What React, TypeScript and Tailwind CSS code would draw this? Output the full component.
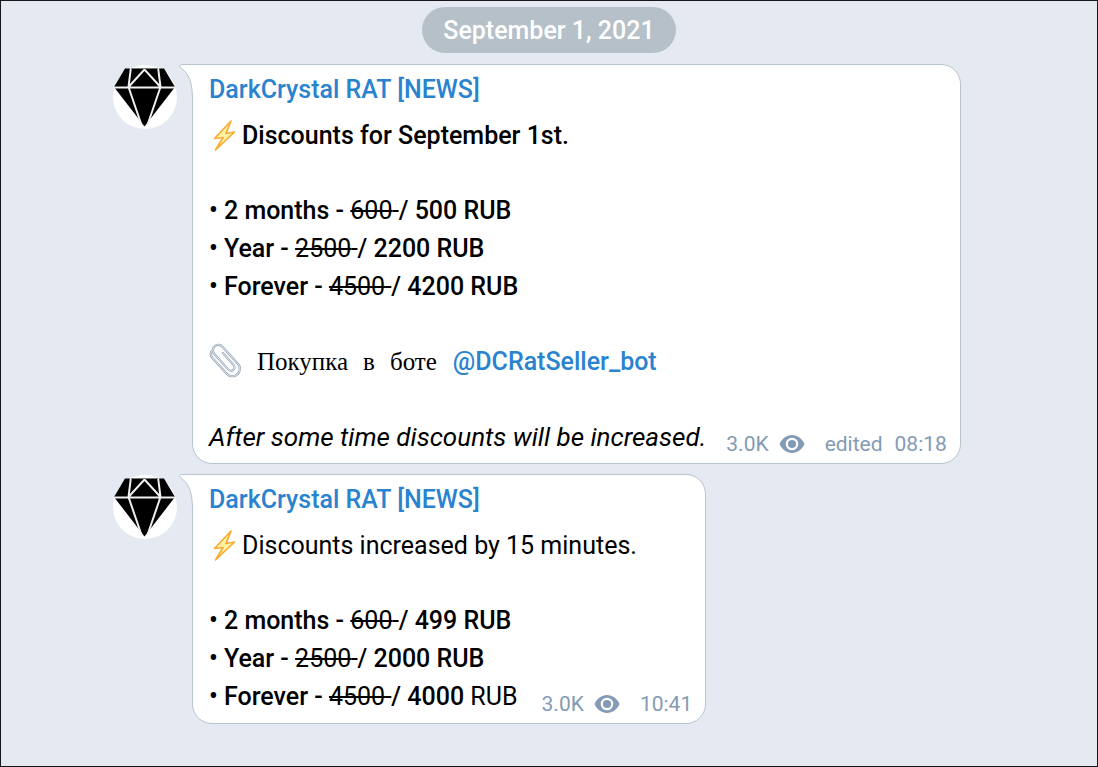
import type { ReactNode } from "react";

type Price = {
  period: string;
  before: string;
  after: string;
  regularCurrency?: boolean;
};

const septemberPrices: Price[] = [
  { period: "2 months", before: "600", after: "500" },
  { period: "Year", before: "2500", after: "2200" },
  { period: "Forever", before: "4500", after: "4200" },
];

const increasedPrices: Price[] = [
  { period: "2 months", before: "600", after: "499" },
  { period: "Year", before: "2500", after: "2000" },
  { period: "Forever", before: "4500", after: "4000", regularCurrency: true },
];

function Avatar() {
  return (
    <svg
      viewBox="0 0 64 64"
      className="mt-px size-16 shrink-0"
      role="img"
      aria-label="DarkCrystal RAT"
    >
      <circle cx="32" cy="32" r="32" fill="#fff" />
      <path d="M12 3.500H51L62 22L31.500 61.500L1 22Z" fill="#000" />
      <path
        d="M0 22.500H63M18 2L15.500 22L28.500 60M45 2L47.500 22L34.500 60M15.500 22L31.500 4.500L47.500 22"
        fill="none"
        stroke="#f0f0f0"
        strokeWidth="2"
      />
      <path d="M18 3.500H45" stroke="#777" strokeWidth="1" />
    </svg>
  );
}

function Bolt() {
  return (
    <svg viewBox="0 0 33 37" className="h-[37px] w-[33px] shrink-0" aria-hidden="true">
      <path
        d="M22 4L5.500 21.500L14 20.500L6.500 33L25.500 15L17 16.500Z"
        fill="#fff3a3"
        stroke="#f9ab35"
        strokeWidth="1.700"
        strokeLinejoin="round"
      />
    </svg>
  );
}

function Paperclip() {
  return (
    <svg viewBox="0 0 33 37" className="h-[37px] w-[33px] shrink-0" aria-hidden="true">
      <g fill="none" strokeLinecap="round" transform="rotate(-42 17 18)">
        <path
          d="M20 10V26A3.500 3.500 0 0 1 13 26V5A5.500 5.500 0 0 1 24 5V28A7.500 7.500 0 0 1 9 28V7A6 6 0 0 1 13 1"
          stroke="#8fa0b3"
          strokeWidth="2.200"
        />
        <path
          d="M20 10V26A3.500 3.500 0 0 1 13 26V5A5.500 5.500 0 0 1 24 5V28A7.500 7.500 0 0 1 9 28V7A6 6 0 0 1 13 1"
          stroke="#dde4ea"
          strokeWidth="1"
        />
      </g>
    </svg>
  );
}

function Eye() {
  return (
    <svg viewBox="0 0 26 18" className="h-[18px] w-[26px]" role="img" aria-label="views">
      <path
        d="M0.500 9C3 3.500 7.500 0 13 0S23 3.500 25.500 9C23 14.500 18.500 18 13 18S3 14.500 0.500 9Z"
        fill="#839bb4"
      />
      <circle cx="13" cy="9" r="5.200" fill="#839bb4" stroke="#fff" strokeWidth="2.200" />
    </svg>
  );
}

function Meta({ edited, time }: { edited?: boolean; time: string }) {
  return (
    <div className="flex items-center text-[21px] leading-6 text-[#839bb4]">
      <span className="mr-[10px]">3.0K</span>
      <Eye />
      <span className="ml-5 flex gap-3">
        {edited && <span>edited</span>}
        <time>{time}</time>
      </span>
    </div>
  );
}

function PriceList({ prices }: { prices: Price[] }) {
  return (
    <ul>
      {prices.map((price) => (
        <li key={price.period} className="font-medium">
          • {price.period} - <s className="font-normal">{price.before} </s>/ {price.after}{" "}
          <span className={price.regularCurrency ? "font-normal" : ""}>RUB</span>
        </li>
      ))}
    </ul>
  );
}

function Message({ children }: { children: ReactNode }) {
  return (
    <article className="flex items-start gap-[15px]">
      <Avatar />
      <div className="relative rounded-[20px] rounded-tl-none border border-[#b9c4ce] bg-white pt-[6px] pr-[13px] pb-[7px] pl-4">
        {/* Tail */}
        <svg
          viewBox="0 0 21 36"
          className="absolute -top-px -left-[14px] h-9 w-[21px]"
          aria-hidden="true"
        >
          <path d="M21 0.500H3C0.500 0.500 0.500 2.500 2 4C10 10 13.500 18 13.500 36H21Z" fill="#fff" />
          <path
            d="M21 0.500H3C0.500 0.500 0.500 2.500 2 4C10 10 13.500 18 13.500 36"
            fill="none"
            stroke="#b9c4ce"
          />
        </svg>
        <h2 className="mb-2 font-medium text-[#2a83cf]">DarkCrystal RAT [NEWS]</h2>
        {children}
      </div>
    </article>
  );
}

export default function App() {
  return (
    <main className="min-h-screen border border-[#17171b] bg-[#e5e9f2] font-['Roboto',sans-serif] text-[25px] leading-[38px] text-black">
      {/* Date */}
      <div className="flex justify-center pt-[6px]">
        <time
          dateTime="2021-09-01"
          className="rounded-full bg-[#b5c0c9] px-[21px] pt-[5px] pb-[3px] font-medium text-white"
        >
          September 1, 2021
        </time>
      </div>

      {/* Messages */}
      <div className="flex flex-col items-start gap-[10px] pt-[11px] pl-28">
        <Message>
          <p className="mb-[37px] flex font-medium">
            <Bolt />
            Discounts for September 1st.
          </p>
          <PriceList prices={septemberPrices} />
          <p className="my-[37px] flex">
            <Paperclip />
            <span className="ml-[15px] flex gap-[15px] font-['Liberation_Serif',serif]">
              <span>Покупка</span>
              <span>в</span>
              <span>боте</span>
            </span>
            <a href="#" className="ml-4 font-medium text-[#2a83cf]">
              @DCRatSeller_bot
            </a>
          </p>
          <div className="flex items-end gap-5">
            <p className="text-[26px] italic">After some time discounts will be increased.</p>
            <Meta edited time="08:18" />
          </div>
        </Message>

        <Message>
          <p className="mb-[37px] flex">
            <Bolt />
            Discounts increased by 15 minutes.
          </p>
          <div className="flex items-end gap-6">
            <PriceList prices={increasedPrices} />
            <Meta time="10:41" />
          </div>
        </Message>
      </div>
    </main>
  );
}
